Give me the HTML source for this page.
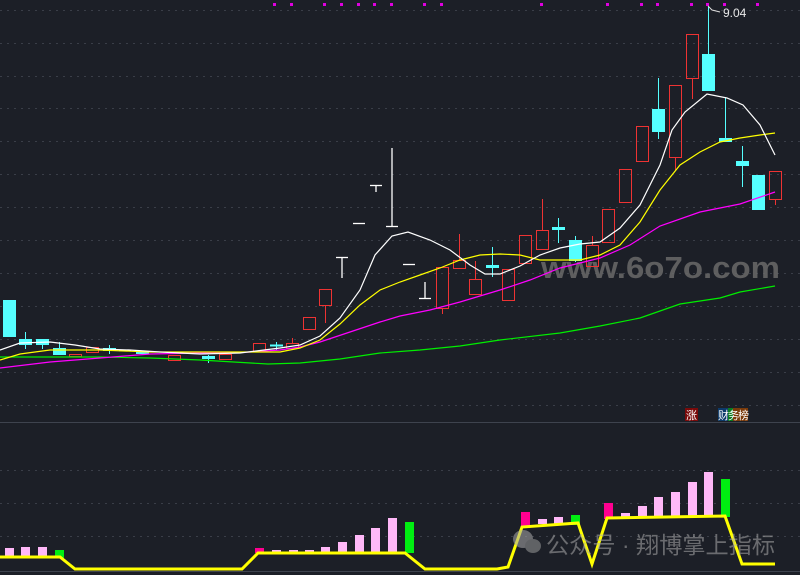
<!DOCTYPE html>
<html><head><meta charset="utf-8"><style>
html,body{margin:0;padding:0;background:#1c1f27;width:800px;height:575px;overflow:hidden}
svg{display:block}
</style></head><body>
<svg width="800" height="575" xmlns="http://www.w3.org/2000/svg" font-family="Liberation Sans, Noto Sans CJK SC, sans-serif">
<rect width="800" height="575" fill="#1c1f27"/>
<g stroke="#3a3e48" stroke-width="1" stroke-dasharray="2,5">
<line x1="0" y1="10.5" x2="800" y2="10.5"/><line x1="0" y1="43.5" x2="800" y2="43.5"/><line x1="0" y1="76.5" x2="800" y2="76.5"/><line x1="0" y1="108.5" x2="800" y2="108.5"/><line x1="0" y1="141.5" x2="800" y2="141.5"/><line x1="0" y1="174.5" x2="800" y2="174.5"/><line x1="0" y1="207.5" x2="800" y2="207.5"/><line x1="0" y1="240.5" x2="800" y2="240.5"/><line x1="0" y1="273.5" x2="800" y2="273.5"/><line x1="0" y1="306.5" x2="800" y2="306.5"/><line x1="0" y1="339.5" x2="800" y2="339.5"/><line x1="0" y1="372.5" x2="800" y2="372.5"/><line x1="0" y1="405.5" x2="800" y2="405.5"/>
<line x1="0" y1="470.5" x2="800" y2="470.5"/><line x1="0" y1="503.5" x2="800" y2="503.5"/><line x1="0" y1="536.5" x2="800" y2="536.5"/>
</g>
<line x1="0" y1="422.5" x2="800" y2="422.5" stroke="#3e434e"/>
<line x1="0" y1="571.5" x2="800" y2="571.5" stroke="#3e434e"/>
<g fill="#e000e0">
<rect x="273" y="3" width="3" height="3"/><rect x="290" y="3" width="3" height="3"/><rect x="323" y="3" width="3" height="3"/><rect x="340" y="3" width="3" height="3"/><rect x="357" y="3" width="3" height="3"/><rect x="373" y="3" width="3" height="3"/><rect x="390" y="3" width="3" height="3"/><rect x="423" y="3" width="3" height="3"/><rect x="440" y="3" width="3" height="3"/>
<rect x="540" y="3" width="3" height="3"/><rect x="606" y="3" width="3" height="3"/><rect x="640" y="3" width="3" height="3"/><rect x="656" y="3" width="3" height="3"/><rect x="690" y="3" width="3" height="3"/><rect x="706" y="3" width="3" height="3"/><rect x="723" y="3" width="3" height="3"/><rect x="756" y="3" width="3" height="3"/>
</g>
<text x="541" y="278" font-size="31" font-weight="bold" fill="#6a6a6a" fill-opacity="0.85" textLength="239" lengthAdjust="spacingAndGlyphs">www.6o7o.com</text>
<!-- candles -->
<g fill="#55ffff" stroke="#55ffff">
<rect x="3.5" y="300.5" width="12" height="36"/>
<rect x="19.5" y="339.5" width="12" height="5"/><line x1="25.5" y1="332" x2="25.5" y2="349"/>
<rect x="36.5" y="339.5" width="12" height="5"/><line x1="42.5" y1="339" x2="42.5" y2="349"/>
<rect x="53.5" y="348.5" width="12" height="6"/><line x1="59.5" y1="342" x2="59.5" y2="355"/>
<rect x="103.5" y="348.5" width="12" height="2"/><line x1="109.5" y1="345" x2="109.5" y2="354"/>
<rect x="136.5" y="351.5" width="12" height="2"/>
<rect x="202.5" y="356.5" width="12" height="2"/><line x1="208.5" y1="355" x2="208.5" y2="363"/>
<rect x="270.5" y="345" width="12" height="1"/><line x1="276.5" y1="342" x2="276.5" y2="350"/>
<rect x="486.5" y="265.5" width="12" height="2"/><line x1="492.5" y1="247" x2="492.5" y2="277"/>
<rect x="552.5" y="227.5" width="12" height="2"/><line x1="558.5" y1="218" x2="558.5" y2="243"/>
<rect x="569.5" y="240.5" width="12" height="20"/><line x1="575.5" y1="236" x2="575.5" y2="262"/>
<rect x="652.5" y="109.5" width="12" height="22"/><line x1="658.5" y1="78" x2="658.5" y2="139"/>
<rect x="702.5" y="54.5" width="12" height="36"/><line x1="708.5" y1="6" x2="708.5" y2="54"/>
<rect x="719.5" y="138.5" width="12" height="3"/><line x1="725.5" y1="97" x2="725.5" y2="138"/>
<rect x="736.5" y="161.5" width="12" height="4"/><line x1="742.5" y1="146" x2="742.5" y2="187"/>
<rect x="752.5" y="175.5" width="12" height="34"/>
</g>
<g fill="none" stroke="#ee3333" stroke-width="1">
<rect x="69.5" y="354.5" width="12" height="2"/>
<rect x="86.5" y="347.5" width="12" height="5"/>
<rect x="168.5" y="355.5" width="12" height="5"/>
<rect x="219.5" y="354.5" width="12" height="5"/>
<rect x="253.5" y="343.5" width="12" height="8"/>
<rect x="286.5" y="343.5" width="12" height="5"/><line x1="292.5" y1="338" x2="292.5" y2="343"/>
<rect x="303.5" y="317.5" width="12" height="12"/>
<rect x="319.5" y="289.5" width="12" height="16"/><line x1="325.5" y1="305" x2="325.5" y2="323"/>
<rect x="436.5" y="267.5" width="12" height="41"/><line x1="442.5" y1="308" x2="442.5" y2="314"/>
<rect x="453.5" y="260.5" width="12" height="8"/><line x1="459.5" y1="234" x2="459.5" y2="260"/>
<rect x="469.5" y="279.5" width="12" height="15"/><line x1="475.5" y1="261" x2="475.5" y2="279"/>
<rect x="502.5" y="269.5" width="12" height="31"/>
<rect x="519.5" y="235.5" width="12" height="28"/>
<rect x="536.5" y="230.5" width="12" height="19"/><line x1="542.5" y1="199" x2="542.5" y2="230"/>
<rect x="586.5" y="245.5" width="12" height="21"/><line x1="592.5" y1="236" x2="592.5" y2="245"/>
<rect x="602.5" y="209.5" width="12" height="33"/>
<rect x="619.5" y="169.5" width="12" height="33"/>
<rect x="636.5" y="126.5" width="12" height="35"/>
<rect x="669.5" y="85.5" width="12" height="72"/><line x1="675.5" y1="157" x2="675.5" y2="171"/>
<rect x="686.5" y="34.5" width="12" height="44"/><line x1="692.5" y1="78" x2="692.5" y2="99"/>
<rect x="769.5" y="171.5" width="12" height="28"/><line x1="775.5" y1="199" x2="775.5" y2="205"/>
</g>
<g stroke="#ffffff" stroke-width="1.3" fill="none">
<line x1="119" y1="350.5" x2="131" y2="350.5"/>
<line x1="336" y1="257.5" x2="348" y2="257.5"/><line x1="342" y1="257" x2="342" y2="278"/>
<line x1="353" y1="223.5" x2="365" y2="223.5"/>
<line x1="370" y1="185.5" x2="382" y2="185.5"/><line x1="376" y1="185" x2="376" y2="192"/>
<line x1="386" y1="226.5" x2="398" y2="226.5"/><line x1="392" y1="148" x2="392" y2="226"/>
<line x1="403" y1="264.5" x2="415" y2="264.5"/>
<line x1="419" y1="298.5" x2="431" y2="298.5"/><line x1="425" y1="282" x2="425" y2="298"/>
</g>
<!-- MAs -->
<polyline fill="none" stroke="#00ee00" stroke-width="1.2" points="0,357 100,357 150,358 200,360 268,364 300,363 340,359 380,353 420,350 460,346 500,340 560,333 600,326 640,318 680,304 720,298 740,292 775,286"/>
<polyline fill="none" stroke="#ff00ff" stroke-width="1.2" points="0,368 50,362 100,358 150,354 200,353 250,352 280,350 300,347 320,342 350,332 380,322 400,316 430,310 460,302 500,290 530,280 560,268 600,258 630,245 660,226 700,212 740,204 775,192"/>
<polyline fill="none" stroke="#ffff00" stroke-width="1.2" points="0,360 20,354 50,350 100,350 150,352 200,352 280,352 300,348 320,340 340,324 360,305 380,290 400,282 420,275 440,268 460,260 480,255 500,254 520,255 540,260 560,260 580,260 600,255 620,245 640,222 660,190 680,165 700,152 720,142 740,138 760,135 775,133"/>
<polyline fill="none" stroke="#ffffff" stroke-width="1.2" points="0,350 20,343 50,342 75,345 100,349 130,350 160,352 200,354 240,353 280,348 300,345 320,336 340,318 360,290 375,255 392,236 408,232 430,240 450,250 470,265 485,274 500,274 520,266 540,255 560,248 580,244 600,242 620,228 640,205 660,165 672,130 685,112 707,94 727,98 743,105 760,125 775,155"/>
<polyline fill="none" stroke="#ddd" stroke-width="1" points="708,6 712,10 720,12"/>
<text x="723" y="17" font-size="12" fill="#e8e8e8">9.04</text>
<!-- labels -->
<rect x="685" y="408" width="13" height="13" fill="#7a0a0a"/><text x="686" y="419" font-size="11" fill="#fff">涨</text>
<rect x="718" y="408" width="10" height="13" fill="#0c3a6a"/><rect x="728" y="408" width="5" height="13" fill="#0a7a20"/><rect x="733" y="408" width="15" height="13" fill="#7a3a0a"/>
<text x="718" y="419" font-size="11" fill="#fff" letter-spacing="-1">财务榜</text>
<!-- lower bars -->
<g fill="#ffb8f8">
<rect x="5" y="548" width="9" height="9"/><rect x="21" y="547" width="9" height="10"/><rect x="38" y="547" width="9" height="10"/>
<rect x="272" y="550" width="9" height="3"/><rect x="289" y="550" width="9" height="3"/><rect x="305" y="550" width="9" height="3"/><rect x="321" y="547" width="9" height="6"/><rect x="338" y="542" width="9" height="11"/><rect x="355" y="535" width="9" height="18"/><rect x="371" y="528" width="9" height="25"/><rect x="388" y="518" width="9" height="35"/>
<rect x="538" y="519" width="9" height="5"/><rect x="554" y="517" width="9" height="7"/>
<rect x="621" y="513" width="9" height="4"/><rect x="638" y="506" width="9" height="11"/><rect x="654" y="497" width="9" height="20"/><rect x="671" y="492" width="9" height="25"/><rect x="688" y="482" width="9" height="35"/><rect x="704" y="472" width="9" height="45"/>
</g>
<g fill="#00ee11">
<rect x="55" y="550" width="9" height="8"/><rect x="405" y="522" width="9" height="31"/><rect x="571" y="515" width="9" height="10"/><rect x="721" y="479" width="9" height="38"/>
</g>
<g fill="#ff0090">
<rect x="255" y="548" width="9" height="5"/><rect x="521" y="512" width="9" height="16"/><rect x="604" y="503" width="9" height="16"/>
</g>
<polyline fill="none" stroke="#ffff00" stroke-width="3" points="0,557 60,557 75,569 242,569 258,553 405,553 425,569 497,569 508,567 522,527 578,523 592,564 607,518 725,516 742,564 775,564"/>
<!-- wechat watermark -->
<g opacity="0.55">
<ellipse cx="523" cy="539" rx="10" ry="9" fill="#aaa"/><ellipse cx="533" cy="546" rx="8" ry="7" fill="#999"/>
<text x="546" y="553" font-size="23" fill="#aaa" textLength="229" lengthAdjust="spacingAndGlyphs">公众号 · 翔博掌上指标</text>
</g>
</svg>
</body></html>
